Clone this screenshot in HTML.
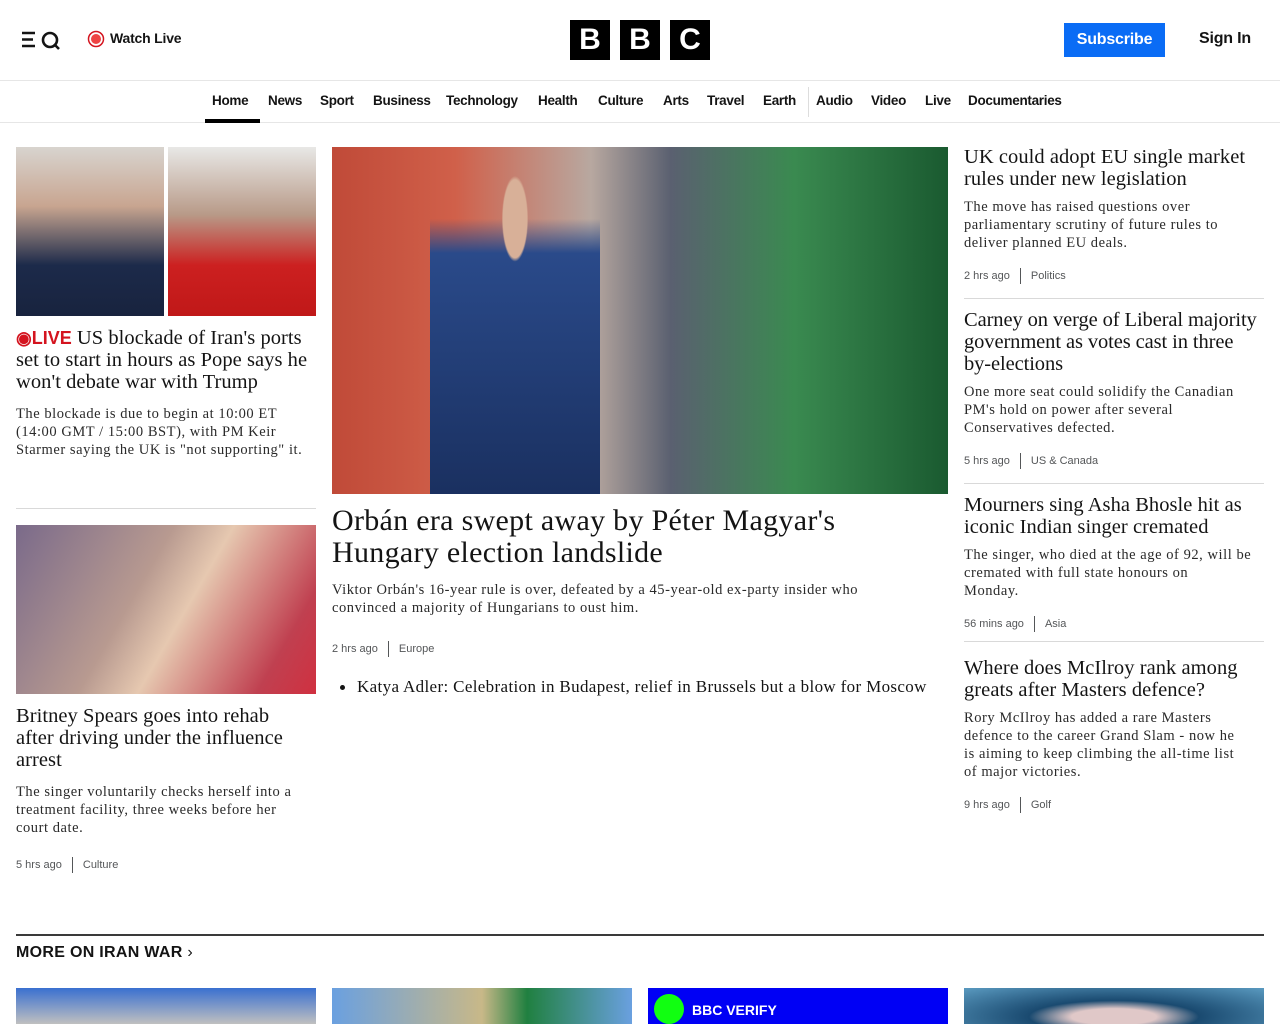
<!DOCTYPE html>
<html><head><meta charset="utf-8"><style>
*{margin:0;padding:0;box-sizing:border-box}
body{width:1280px;height:1024px;overflow:hidden;background:#fff;font-family:"Liberation Serif",serif;color:#141414}
.sans{font-family:"Liberation Sans",sans-serif}
.top{height:81px;border-bottom:1px solid #e6e6e6;position:relative}
.nav{height:42px;border-bottom:1px solid #e6e6e6;position:relative;font-family:"Liberation Sans",sans-serif;font-size:13.5px;font-weight:bold;letter-spacing:-0.3px}
.nav span{position:absolute;top:12px}
.abs{position:absolute}
h2{font-weight:normal;font-size:20.5px;line-height:22px;letter-spacing:0.05px;white-space:nowrap;color:#141414}
p.d{font-size:14.5px;line-height:18px;color:#2a2a2a;letter-spacing:0.55px;white-space:nowrap}
.meta{font-family:"Liberation Sans",sans-serif;font-size:11px;color:#545658}
.meta i{display:inline-block;width:1px;height:16px;background:#545658;vertical-align:middle;margin:0 10px}
.hr{position:absolute;height:1px;background:#d9d9d9}
</style></head><body>
<div class="top">
 <svg class="abs" style="left:22px;top:30px" width="40" height="20" viewBox="0 0 40 20"><path d="M0 3h13M0 9.5h11M0 16h13" stroke="#141414" stroke-width="2.4"/><circle cx="28" cy="10" r="7" fill="none" stroke="#141414" stroke-width="2.6"/><path d="M32 14l5 5" stroke="#141414" stroke-width="2.6"/></svg>
 <svg class="abs" style="left:87px;top:30px" width="18" height="18"><circle cx="9" cy="9" r="7.5" fill="none" stroke="#d4141f" stroke-width="1.5"/><circle cx="9" cy="9" r="5" fill="#e44"/></svg>
 <div class="abs sans" style="left:110px;top:30px;font-size:14px;font-weight:bold;letter-spacing:-0.2px">Watch Live</div>
 <div class="abs" style="left:570px;top:20px;display:flex;gap:10px">
  <div style="width:40px;height:40px;background:#000;color:#fff;font:bold 30px 'Liberation Sans';text-align:center;line-height:40px">B</div>
  <div style="width:40px;height:40px;background:#000;color:#fff;font:bold 30px 'Liberation Sans';text-align:center;line-height:40px">B</div>
  <div style="width:40px;height:40px;background:#000;color:#fff;font:bold 30px 'Liberation Sans';text-align:center;line-height:40px">C</div>
 </div>
 <div class="abs sans" style="left:1064px;top:23px;width:101px;height:34px;background:#0a6cf5;color:#fff;font-size:16px;font-weight:bold;text-align:center;line-height:34px;letter-spacing:-0.2px">Subscribe</div>
 <div class="abs sans" style="left:1199px;top:30px;font-size:16px;font-weight:bold;letter-spacing:-0.2px">Sign In</div>
</div>
<div class="nav">
 <span style="left:212px">Home</span><div class="abs" style="left:205px;top:38px;width:55px;height:4px;background:#000"></div>
 <span style="left:268px">News</span><span style="left:320px">Sport</span><span style="left:373px">Business</span><span style="left:446px">Technology</span><span style="left:538px">Health</span><span style="left:598px">Culture</span><span style="left:663px">Arts</span><span style="left:707px">Travel</span><span style="left:763px">Earth</span>
 <div class="abs" style="left:808px;top:6px;width:1px;height:30px;background:#ddd"></div>
 <span style="left:816px">Audio</span><span style="left:871px">Video</span><span style="left:925px">Live</span><span style="left:968px">Documentaries</span>
</div>

<div class="abs" style="left:16px;top:147px;width:148px;height:169px;background:linear-gradient(180deg,#d8d4cf 0,#c8a590 35%,#1c2a4a 70%,#18233e)"></div>
<div class="abs" style="left:168px;top:147px;width:148px;height:169px;background:linear-gradient(180deg,#e8e8e6 0,#b89a88 40%,#cc2020 70%,#c01818)"></div>
<h2 class="abs" style="left:16px;top:327px"><span class="sans" style="color:#d4141f;font-weight:bold;font-size:18px;letter-spacing:0">◉LIVE</span> US blockade of Iran's ports<br>set to start in hours as Pope says he<br>won't debate war with Trump</h2>
<p class="d abs" style="left:16px;top:405px">The blockade is due to begin at 10:00 ET<br>(14:00 GMT / 15:00 BST), with PM Keir<br>Starmer saying the UK is "not supporting" it.</p>
<div class="hr" style="left:16px;top:508px;width:300px"></div>
<div class="abs" style="left:16px;top:525px;width:300px;height:169px;background:linear-gradient(120deg,#7a6a8a 0,#b89a90 40%,#e6c8b0 55%,#c04050 85%,#d03040)"></div>
<h2 class="abs" style="left:16px;top:705px">Britney Spears goes into rehab<br>after driving under the influence<br>arrest</h2>
<p class="d abs" style="left:16px;top:783px">The singer voluntarily checks herself into a<br>treatment facility, three weeks before her<br>court date.</p>
<div class="meta abs" style="left:16px;top:857px">5 hrs ago<i></i>Culture</div>

<div class="abs" style="left:332px;top:147px;width:616px;height:347px;background:linear-gradient(90deg,#c04a38 0,#d0604a 20%,#b8a8a0 42%,#5a6070 55%,#3a8a50 75%,#1a5a30)"></div>
<div class="abs" style="left:430px;top:150px;width:170px;height:344px;background:radial-gradient(ellipse at 50% 20%,#d8b098 0 10%,transparent 11%),linear-gradient(180deg,transparent 20%,#2a4a8a 30%,#1a3060)"></div>
<h2 class="abs" style="left:332px;top:505px;font-size:30px;line-height:32px;letter-spacing:0.3px">Orbán era swept away by Péter Magyar's<br>Hungary election landslide</h2>
<p class="d abs" style="left:332px;top:581px">Viktor Orbán's 16-year rule is over, defeated by a 45-year-old ex-party insider who<br>convinced a majority of Hungarians to oust him.</p>
<div class="meta abs" style="left:332px;top:641px">2 hrs ago<i></i>Europe</div>
<div class="abs" style="left:340px;top:685px;width:5px;height:5px;background:#141414;border-radius:50%"></div>
<div class="abs" style="left:357px;top:677px;font-size:17px;letter-spacing:0.35px;white-space:nowrap">Katya Adler: Celebration in Budapest, relief in Brussels but a blow for Moscow</div>

<h2 class="abs" style="left:964px;top:146px">UK could adopt EU single market<br>rules under new legislation</h2>
<p class="d abs" style="left:964px;top:198px">The move has raised questions over<br>parliamentary scrutiny of future rules to<br>deliver planned EU deals.</p>
<div class="meta abs" style="left:964px;top:268px">2 hrs ago<i></i>Politics</div>
<div class="hr" style="left:964px;top:298px;width:300px"></div>
<h2 class="abs" style="left:964px;top:309px;letter-spacing:-0.1px">Carney on verge of Liberal majority<br>government as votes cast in three<br>by-elections</h2>
<p class="d abs" style="left:964px;top:383px">One more seat could solidify the Canadian<br>PM's hold on power after several<br>Conservatives defected.</p>
<div class="meta abs" style="left:964px;top:453px">5 hrs ago<i></i>US &amp; Canada</div>
<div class="hr" style="left:964px;top:483px;width:300px"></div>
<h2 class="abs" style="left:964px;top:494px">Mourners sing Asha Bhosle hit as<br>iconic Indian singer cremated</h2>
<p class="d abs" style="left:964px;top:546px">The singer, who died at the age of 92, will be<br>cremated with full state honours on<br>Monday.</p>
<div class="meta abs" style="left:964px;top:616px">56 mins ago<i></i>Asia</div>
<div class="hr" style="left:964px;top:641px;width:300px"></div>
<h2 class="abs" style="left:964px;top:657px">Where does McIlroy rank among<br>greats after Masters defence?</h2>
<p class="d abs" style="left:964px;top:709px">Rory McIlroy has added a rare Masters<br>defence to the career Grand Slam - now he<br>is aiming to keep climbing the all-time list<br>of major victories.</p>
<div class="meta abs" style="left:964px;top:797px">9 hrs ago<i></i>Golf</div>

<div class="abs" style="left:16px;top:934px;width:1248px;height:2px;background:#3a3a3a"></div>
<div class="abs sans" style="left:16px;top:944px;font-size:16px;font-weight:bold;letter-spacing:0.3px">MORE ON IRAN WAR <span style="font-weight:normal">›</span></div>
<div class="abs" style="left:16px;top:988px;width:300px;height:36px;background:linear-gradient(180deg,#3a70d0,#c0c0c0)"></div>
<div class="abs" style="left:332px;top:988px;width:300px;height:36px;background:linear-gradient(90deg,#6aa0e0,#c8b888 50%,#208040 65%,#6aa0e0)"></div>
<div class="abs" style="left:648px;top:988px;width:300px;height:36px;background:#0000f5"><div class="sans" style="position:absolute;left:44px;top:14px;color:#fff;font-weight:bold;font-size:14px">BBC VERIFY</div><div style="position:absolute;left:6px;top:6px;width:30px;height:30px;border-radius:50%;background:#1f1;"></div></div>
<div class="abs" style="left:964px;top:988px;width:300px;height:36px;background:radial-gradient(ellipse at 50% 80%,#e0c8c8 0 20%,#1a4a70 40%,#5a9ac0)"></div>
</body></html>
